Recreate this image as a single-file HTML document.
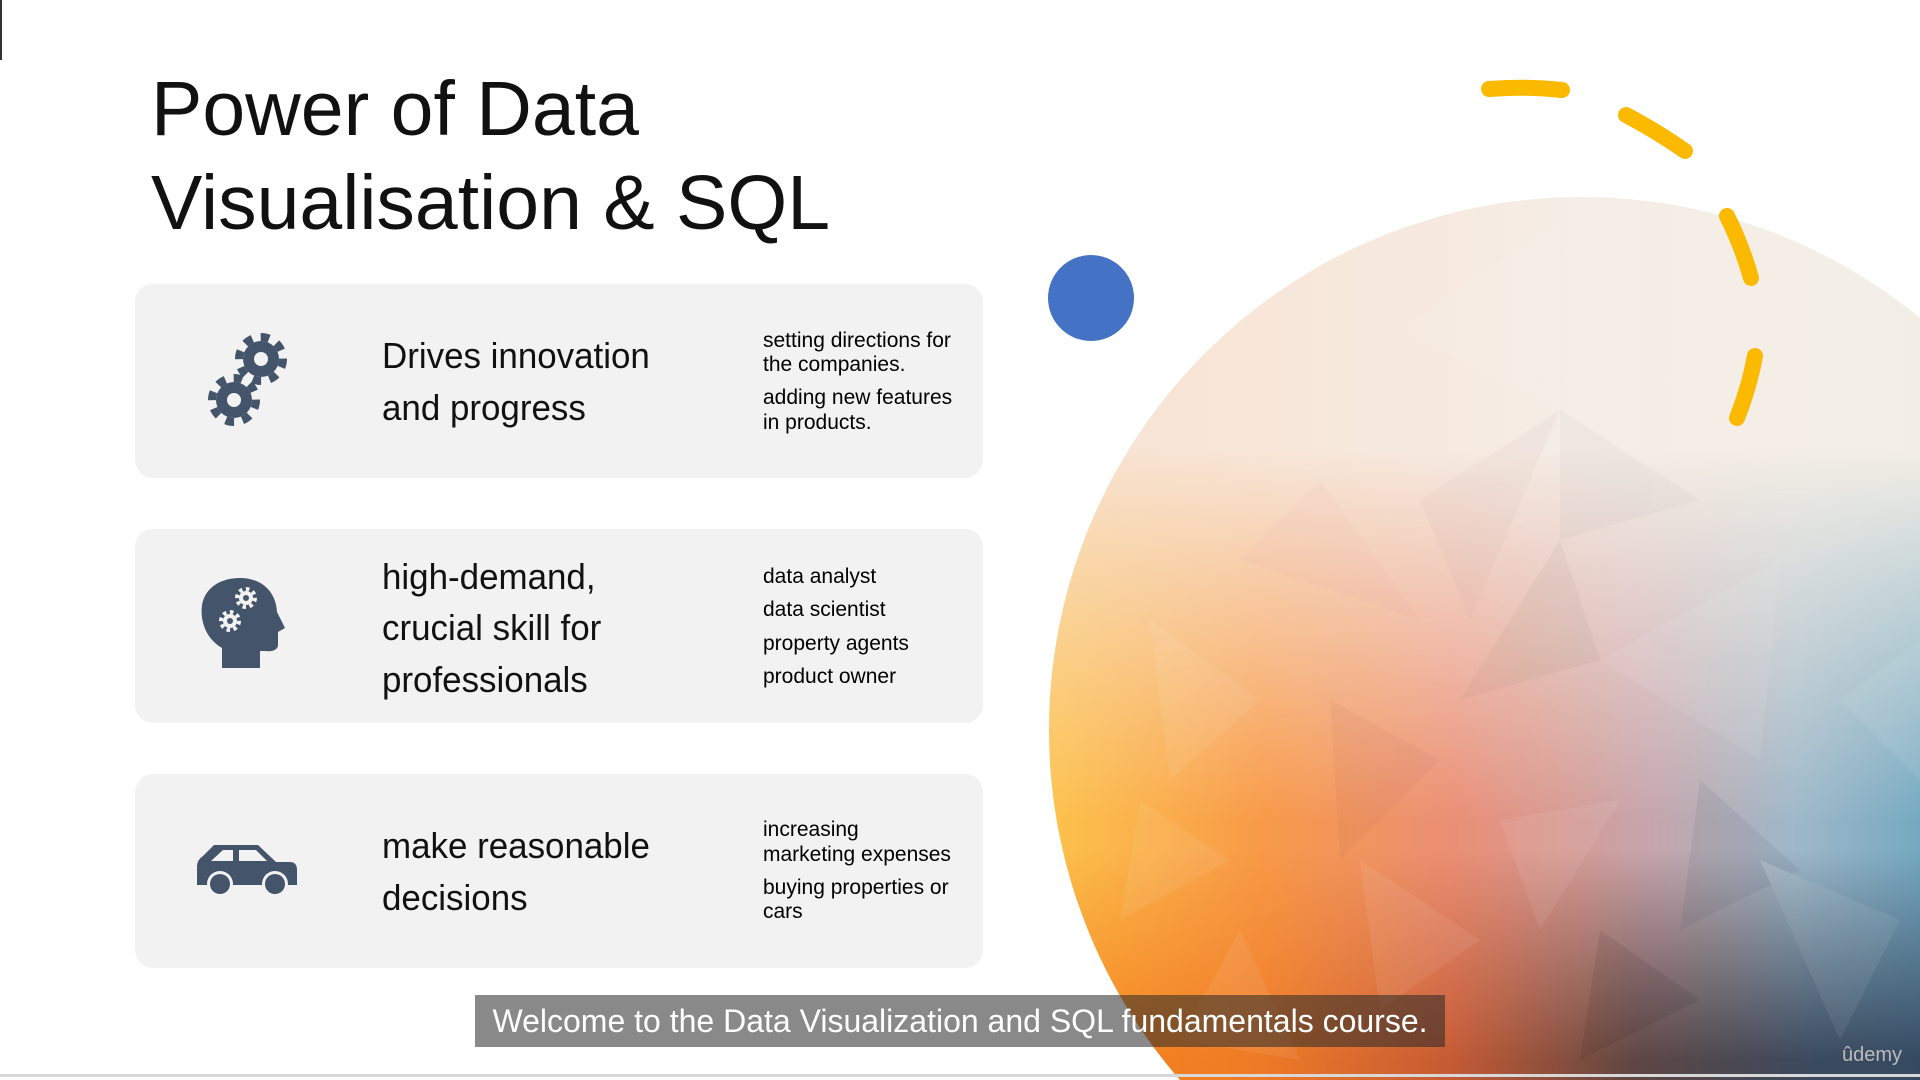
<!DOCTYPE html>
<html><head><meta charset="utf-8"><style>
html,body{margin:0;padding:0;}
body{width:1920px;height:1080px;position:relative;overflow:hidden;background:#fff;font-family:"Liberation Sans",sans-serif;}
.t{position:absolute;left:151px;font-size:77px;color:#111;white-space:nowrap;line-height:1;}
.card{position:absolute;left:135px;width:848px;height:194px;background:#f2f2f2;border-radius:18px;}
.m{position:absolute;left:382px;font-size:36px;color:#111;transform:scaleX(0.97);transform-origin:left;white-space:nowrap;line-height:1;}
.s{position:absolute;left:763px;font-size:21px;color:#000;white-space:nowrap;line-height:1;}
.cap{position:absolute;left:475px;top:995px;width:970px;height:52px;background:rgba(40,40,40,0.55);color:#fff;font-size:32px;line-height:52px;text-align:center;white-space:nowrap;}
</style></head><body>
<svg width="1920" height="1080" style="position:absolute;left:0;top:0">
<defs>
<clipPath id="cc"><circle cx="1582" cy="730" r="533"/></clipPath>
<linearGradient id="hz" x1="1049" y1="0" x2="2115" y2="0" gradientUnits="userSpaceOnUse">
<stop offset="0" stop-color="#fcc24c"/><stop offset="0.2" stop-color="#f89a48"/><stop offset="0.38" stop-color="#ea8f76"/><stop offset="0.55" stop-color="#c9a3a8"/><stop offset="0.7" stop-color="#9fb8c8"/><stop offset="0.85" stop-color="#6aa5c0"/><stop offset="1" stop-color="#4b8fb0"/></linearGradient>
<linearGradient id="hz2" x1="1049" y1="0" x2="2115" y2="0" gradientUnits="userSpaceOnUse">
<stop offset="0" stop-color="#f7861c"/><stop offset="0.2" stop-color="#ee7a26"/><stop offset="0.38" stop-color="#c45a34"/><stop offset="0.55" stop-color="#5e4644"/><stop offset="0.72" stop-color="#3a4a5e"/><stop offset="1" stop-color="#2c4a66"/></linearGradient>
<linearGradient id="v1" x1="0" y1="450" x2="0" y2="820" gradientUnits="userSpaceOnUse"><stop offset="0" stop-color="#fff" stop-opacity="0"/><stop offset="1" stop-color="#fff" stop-opacity="1"/></linearGradient>
<linearGradient id="v2" x1="0" y1="850" x2="0" y2="1060" gradientUnits="userSpaceOnUse"><stop offset="0" stop-color="#fff" stop-opacity="0"/><stop offset="1" stop-color="#fff" stop-opacity="1"/></linearGradient>
<mask id="m1"><rect x="1000" y="0" width="920" height="1080" fill="url(#v1)"/></mask>
<mask id="m2"><rect x="1000" y="0" width="920" height="1080" fill="url(#v2)"/></mask>
<linearGradient id="top" x1="1049" y1="0" x2="2115" y2="0" gradientUnits="userSpaceOnUse"><stop offset="0" stop-color="#f9e2d0"/><stop offset="0.5" stop-color="#f5ede6"/><stop offset="1" stop-color="#f1efe6"/></linearGradient>
</defs>
<g clip-path="url(#cc)">
<rect x="1040" y="190" width="880" height="900" fill="url(#top)"/>
<rect x="1040" y="190" width="880" height="900" fill="url(#hz)" mask="url(#m1)"/>
<rect x="1040" y="190" width="880" height="900" fill="url(#hz2)" mask="url(#m2)"/>
<g opacity="0.07">
<polygon points="1560,220 1400,330 1560,410" fill="#fff"/>
<polygon points="1560,410 1420,500 1470,620" fill="#b99"/>
<polygon points="1560,410 1700,500 1560,540" fill="#999"/>
<polygon points="1320,480 1240,560 1420,620" fill="#e9a"/>
<polygon points="1560,540 1460,700 1600,660" fill="#776"/>
<polygon points="1600,660 1780,560 1760,760" fill="#fff"/>
<polygon points="1150,620 1260,700 1170,780" fill="#fff"/>
<polygon points="1330,700 1440,760 1340,860" fill="#a55"/>
<polygon points="1500,820 1620,800 1540,930" fill="#fff"/>
<polygon points="1700,780 1800,870 1680,930" fill="#234"/>
<polygon points="1140,800 1230,860 1120,920" fill="#fff"/>
<polygon points="1360,860 1480,940 1380,1010" fill="#fff"/>
<polygon points="1760,860 1900,920 1840,1040" fill="#fff"/>
<polygon points="1600,930 1700,1000 1580,1060" fill="#000"/>
<polygon points="1240,930 1300,1060 1180,1040" fill="#fff"/>
<polygon points="1840,700 1920,640 1920,780" fill="#fff"/>
</g>
</g>
<circle cx="1091" cy="298" r="43" fill="#4472c4"/>
<g stroke="#fbb900" stroke-width="16" stroke-linecap="round" fill="none">
<path d="M1489,89 Q1525,86 1562,90"/>
<path d="M1626,115 Q1658,132 1685,151"/>
<path d="M1727,216 Q1742,246 1751,278"/>
<path d="M1755,356 Q1749,388 1737,418"/>
</g>
<rect x="0" y="0" width="2" height="60" fill="#333"/>
<rect x="0" y="1074" width="1920" height="3" fill="#d8d8d8"/>
</svg>
<div class="t" style="top:71px">Power of Data</div>
<div class="t" style="top:165px">Visualisation &amp; SQL</div>
<div class="card" style="top:284px"></div>
<div class="card" style="top:529px"></div>
<div class="card" style="top:774px"></div>
<svg width="1920" height="1080" style="position:absolute;left:0;top:0">
<g fill="#44546a">
<circle cx="261" cy="359" r="18"/>
<circle cx="261" cy="359" r="22" fill="none" stroke="#44546a" stroke-width="8" stroke-dasharray="8.6 8.6"/>
<circle cx="261" cy="359" r="7" fill="#f2f2f2"/>
<circle cx="234" cy="400" r="18"/>
<circle cx="234" cy="400" r="22" fill="none" stroke="#44546a" stroke-width="8" stroke-dasharray="8.6 8.6"/>
<circle cx="234" cy="400" r="7" fill="#f2f2f2"/>
<path d="M222 668 L222 648 C205 638 200 620 202 605 C205 588 220 578 240 578 C262 578 276 592 277 612 L285 628 L278 632 L278 645 C278 650 272 652 265 651 L260 651 L260 668 Z"/>
<g fill="#f2f2f2"><circle cx="246" cy="598" r="7"/><circle cx="246" cy="598" r="9" fill="none" stroke="#f2f2f2" stroke-width="4" stroke-dasharray="3.5 3.5"/><circle cx="230" cy="621" r="7"/><circle cx="230" cy="621" r="9" fill="none" stroke="#f2f2f2" stroke-width="4" stroke-dasharray="3.5 3.5"/></g>
<circle cx="246" cy="598" r="3"/><circle cx="230" cy="621" r="3"/>
<path d="M214 845 L258 845 L276 862 L290 862 Q297 862 297 870 L297 885 L197 885 L197 866 Q197 860 203 856 Z"/>
<path d="M211 861 L223 850 L233 850 L233 861 Z M239 850 L256 850 L267 861 L239 861 Z" fill="#f2f2f2"/>
<circle cx="220" cy="884" r="13" fill="#f2f2f2"/><circle cx="220" cy="884" r="10"/>
<circle cx="275" cy="884" r="13" fill="#f2f2f2"/><circle cx="275" cy="884" r="10"/>
</g>
</svg>
<div class="m" style="top:338px">Drives innovation</div>
<div class="m" style="top:390px">and progress</div>
<div class="m" style="top:559px">high-demand,</div>
<div class="m" style="top:610px">crucial skill for</div>
<div class="m" style="top:662px">professionals</div>
<div class="m" style="top:828px">make reasonable</div>
<div class="m" style="top:880px">decisions</div>
<div class="s" style="top:330px">setting directions for</div>
<div class="s" style="top:354px">the companies.</div>
<div class="s" style="top:387px">adding new features</div>
<div class="s" style="top:412px">in products.</div>
<div class="s" style="top:566px">data analyst</div>
<div class="s" style="top:599px">data scientist</div>
<div class="s" style="top:633px">property agents</div>
<div class="s" style="top:666px">product owner</div>
<div class="s" style="top:819px">increasing</div>
<div class="s" style="top:844px">marketing expenses</div>
<div class="s" style="top:877px">buying properties or</div>
<div class="s" style="top:901px">cars</div>
<div class="cap">Welcome to the Data Visualization and SQL fundamentals course.</div>
<div style="position:absolute;left:1842px;top:1044px;color:#bbb;font-size:20px;">ûdemy</div>
</body></html>
